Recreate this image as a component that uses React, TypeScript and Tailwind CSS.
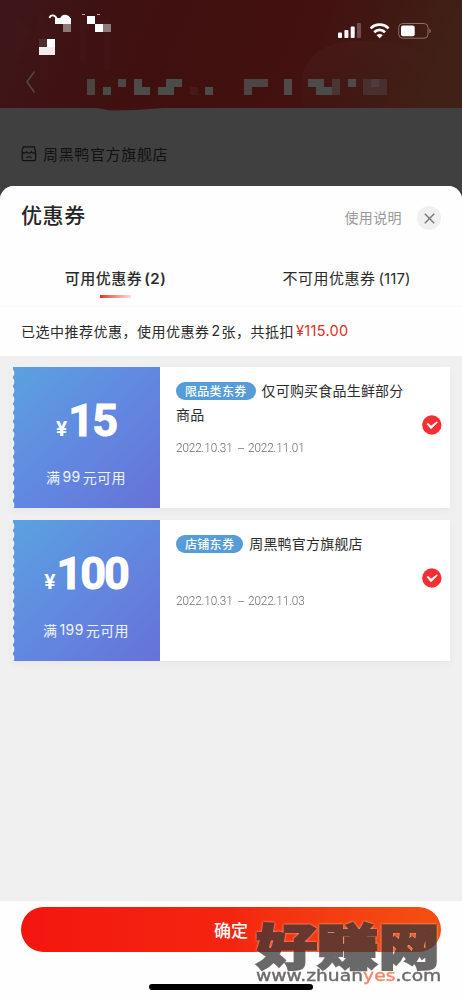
import React from 'react';

interface Coupon {
  amount: string;
  condition: string;
  tag: string;
  title: string;
  start: string;
  end: string;
}

const coupons: Coupon[] = [
  {
    amount: '15',
    condition: '99',
    tag: '限品类东券',
    title: '仅可购买食品生鲜部分商品',
    start: '2022.10.31',
    end: '2022.11.01',
  },
  {
    amount: '100',
    condition: '199',
    tag: '店铺东券',
    title: '周黑鸭官方旗舰店',
    start: '2022.10.31',
    end: '2022.11.03',
  },
];

// x, y, width, height, color
const blocks: [number, number, number, number, string][] = [
  [55, 18, 16, 6, '#fff'],
  [63, 24, 8, 8, '#8e7777'],
  [87, 16, 8, 8, '#fff'],
  [95, 24, 8, 8, '#fff'],
  [103, 24, 8, 8, '#8d7b7b'],
  [39, 39, 8, 8, '#4b2f2f'],
  [47, 39, 8, 8, '#fff'],
  [39, 47, 16, 8, '#f3eaec'],
  [87, 79, 8, 16, '#4b4542'],
  [103, 87, 8, 8, '#4b4b49'],
  [118, 79, 8, 8, '#4b4746'],
  [134, 79, 8, 16, '#4b4b49'],
  [142, 87, 8, 8, '#4b4b49'],
  [158, 87, 16, 8, '#4b4b49'],
  [166, 79, 16, 8, '#4b4b49'],
  [190, 87, 8, 8, '#471a18'],
  [205, 87, 8, 8, '#4b4b49'],
  [244, 79, 24, 8, '#4b4644'],
  [244, 87, 8, 8, '#4b4644'],
  [284, 79, 8, 16, '#4d4a49'],
  [308, 79, 16, 8, '#4b4b49'],
  [316, 87, 16, 8, '#4b4b49'],
  [332, 79, 8, 16, '#4a3534'],
  [348, 79, 8, 8, '#4b4b49'],
  [363, 79, 24, 16, '#49302e'],
  [371, 79, 8, 8, '#4c3c3a'],
];

const Header: React.FC = () => (
  <svg className="block h-[111px] w-[462px] shrink-0" viewBox="0 0 462 111">
    <defs>
      <linearGradient id="head" x1="0" y1="0" x2="1" y2="0.1">
        <stop offset="0" stopColor="#3e161a" />
        <stop offset="0.35" stopColor="#3f100f" />
        <stop offset="0.7" stopColor="#421110" />
        <stop offset="1" stopColor="#402017" />
      </linearGradient>
      <linearGradient id="fan" x1="0" y1="0" x2="0.8" y2="1">
        <stop offset="0" stopColor="#4c2020" stopOpacity="0.45" />
        <stop offset="0.7" stopColor="#4c2020" stopOpacity="0" />
      </linearGradient>
    </defs>
    <rect width="462" height="111" fill="#404040" />
    <rect width="462" height="108" fill="url(#head)" />
    <path d="M95 107.500h75q-30 3-60 3z" fill="#421110" />
    <path d="M302 75c8-26 30-34 60-34 40 0 70 14 100 36v31H302z" fill="url(#fan)" />
    <path d="M15 15v50l15-35zM38 10l10 10v60h-8zM80 20h30v50h-6V30H86v30h-6z" fill="#481c1d" opacity="0.3" />
    <path d="M49.500 18c1-3.500 5.500-3.500 7 .5" fill="none" stroke="#fff" strokeWidth="1.800" />
    <path d="M60 19c1-5 8-6 11 0z" fill="#fff" />
    <path d="M82 14.500h3M97 14.500h3" stroke="#b9a5a5" strokeWidth="1" />
    {blocks.map(([x, y, w, h, fill]) => (
      <rect key={`${x}-${y}`} x={x} y={y} width={w} height={h} fill={fill} />
    ))}
    <path d="M34.500 71.500 27 81.800l7.500 10.700" fill="none" stroke="#554343" strokeWidth="1.700" />
    <g fill="#fff">
      <rect x="338" y="32.500" width="4" height="5.500" rx="1" />
      <rect x="344.400" y="30" width="4" height="8" rx="1" />
      <rect x="350.700" y="26.500" width="4" height="11.500" rx="1" />
      <rect x="357" y="23" width="4" height="15" rx="1" opacity="0.25" />
    </g>
    <g fill="none" stroke="#fff" strokeWidth="2.700">
      <path d="M370.600 28.400c5-5 13-5 18 0" />
      <path d="M374.200 32.200c3-3 7.800-3 10.800 0" />
    </g>
    <path d="M376.500 35.200c1.800-1.700 4.600-1.700 6.300 0l-3.100 3.100z" fill="#fff" />
    <rect x="398.700" y="23.500" width="29.300" height="14.700" rx="4" fill="none" stroke="#8a6d69" />
    <rect x="401" y="25.500" width="13.700" height="10.700" rx="2" fill="#fff" />
    <path d="M429.300 28.500c2 .8 2 4 0 4.800z" fill="#8a6d69" />
  </svg>
);

const ShopRow: React.FC = () => (
  <div className="flex h-[75px] shrink-0 items-center pt-[11px] pl-[21px]">
    <svg className="h-4 w-4" viewBox="0 0 16 16" fill="none" stroke="#111" strokeWidth="1.200">
      <path d="M2.500.8h10.800l1.200 4c.2 1.600-.8 2.300-1.800 2.300-1.400 0-2.100-1.400-2.100-1.400S9.800 7.100 8 7.100 5.400 5.700 5.400 5.700 4.700 7.100 3.300 7.100C2.100 7.100.7 6.200.9 4.800z" />
      <path d="M1.200 6.800v6.400c0 .8.600 1.400 1.400 1.400h10.600c.8 0 1.400-.6 1.400-1.400V6.800M5.500 11.800c1.300-1.300 3.700-1.300 5 0" />
    </svg>
    <span className="ml-[6px] text-[15px] leading-5 tracking-[0.65px] text-[#111]">周黑鸭官方旗舰店</span>
  </div>
);

const CouponCard: React.FC<{ coupon: Coupon }> = ({ coupon }) => (
  <div className="flex h-[141px] bg-white shadow-[0_3px_8px_rgba(0,0,0,0.04)]">
    <div className="relative flex w-[148px] flex-col items-center bg-gradient-to-br from-[#5aa2e0] via-[#6188e0] to-[#6672d8] text-white">
      <svg className="absolute top-0 left-0 h-full w-[3px]" viewBox="0 0 3 141">
        {Array.from({ length: 16 }, (_, i) => (
          <ellipse key={i} cx="0" cy={6 + i * 8.8} rx="2.300" ry="3.600" fill="#f0f0f0" />
        ))}
        <rect width="1" height="141" fill="#f0f0f0" />
      </svg>
      <div className="mt-[28px] flex h-[52px] items-baseline font-['Roboto','Noto_Sans_CJK_SC',sans-serif] font-bold">
        <span className="mr-[1px] text-[21px] leading-[52px]">¥</span>
        <span className="text-[45px] leading-[52px] tracking-[-2px] [-webkit-text-stroke:1px_white]">{coupon.amount}</span>
      </div>
      <div className="mt-[20px] flex h-5 items-center gap-[2px] text-[14px] leading-5 tracking-[0.4px] text-white/90">
        <span>满</span>
        <span className="font-['Inter','Noto_Sans_CJK_SC',sans-serif]">{coupon.condition}</span>
        <span>元可用</span>
      </div>
    </div>
    <div className="flex flex-1 items-start pl-4">
      <div className="w-[236px] pt-[11px]">
        <div className="h-[54px] text-[14px] leading-6 tracking-[0.2px] text-[#2c2c2c]">
          <span className="mr-[6px] inline-block h-[18px] rounded-full bg-[#559cd9] px-[9px] align-[0px] text-[12px] leading-[17px] font-medium tracking-[0.3px] text-white">
            {coupon.tag}
          </span>
          {coupon.title}
        </div>
        <div className="mt-[6px] flex items-center font-['Roboto','Noto_Sans_CJK_SC',sans-serif] text-[13px] leading-5 font-light text-[#6c6c6c]">
          <span className="w-[62px] origin-left scale-x-[0.9] tracking-[-0.1px]">{coupon.start}</span>
          <span className="h-px w-[6px] bg-[#999]" />
          <span className="ml-[4px] w-[62px] origin-left scale-x-[0.9] tracking-[-0.1px]">{coupon.end}</span>
        </div>
      </div>
    </div>
    <div className="flex w-[28px] items-center pb-[25px]">
      <svg className="h-5 w-5" viewBox="0 0 20 20">
        <circle cx="9.800" cy="10" r="9.700" fill="#f52e32" />
        <path d="m4.500 9 1.700-.9 2.900 2.600 5.600-4.200 1.200.8-6.300 6.500h-1z" fill="#fff" />
      </svg>
    </div>
  </div>
);

const Watermark: React.FC = () => (
  <div className="pointer-events-none absolute top-[920px] left-[256px] w-[190px]">
    <div className="h-[47px] w-[150px] origin-left scale-x-[1.25] text-[49px] leading-[47px] font-black whitespace-nowrap text-[#383838] opacity-75 drop-shadow-[0_0_1px_#ffe4dc] [-webkit-text-stroke:2px_#383838]">
      好赚网
    </div>
    <div className="mt-[1px] w-[150px] origin-left scale-x-[1.17] font-['DejaVu_Sans',sans-serif] text-[16px] leading-4 whitespace-nowrap text-[#6b6b6b] [-webkit-text-stroke:0.4px_currentColor]">
      www.zhuan<span className="text-[#fa8468]">yes</span>.com
    </div>
  </div>
);

export default function App() {
  return (
    <div className="relative flex h-[1000px] w-[462px] flex-col overflow-hidden bg-[#404040] font-['Noto_Sans_CJK_SC',sans-serif]">
      <Header />
      <ShopRow />
      <div className="flex flex-1 flex-col overflow-hidden rounded-t-[14px] bg-[#f0f0f0]">
        <div className="bg-[#fefefe]">
          <div className="flex h-[64px] items-center pr-[21px] pl-[21px]">
            <h2 className="pb-[8px] text-[21px] leading-7 font-medium tracking-[0.6px] text-[#262626]">优惠券</h2>
            <span className="ml-auto pb-[2px] text-[14px] leading-5 tracking-[0.4px] text-[#999]">使用说明</span>
            <div className="ml-[15px] flex h-6 w-6 items-center justify-center rounded-full bg-[#f0f0f0]">
              <svg className="h-[11px] w-[11px]" viewBox="0 0 11 11" stroke="#777" strokeWidth="1.400">
                <path d="m.8.8 9.400 9.400M10.200.8.800 10.200" />
              </svg>
            </div>
          </div>
          <div className="flex h-[57px] border-b border-[#fafafa] text-[15px] leading-5 tracking-[0.5px] text-[#2b2b2b]">
            <div className="flex w-1/2 flex-col items-center pt-[18px] font-medium">
              <span>
                可用优惠券<span className="ml-[2px] font-['Inter',sans-serif] font-semibold">(2)</span>
              </span>
              <span className="mt-[6px] h-[3px] w-[31px] bg-gradient-to-r from-[#e0281e] to-[#fbdcdc]" />
            </div>
            <div className="w-1/2 pt-[18px] text-center">
              不可用优惠券<span className="ml-[3px] font-['Inter',sans-serif] tracking-[0.1px]">(117)</span>
            </div>
          </div>
          <div className="flex h-[49px] items-center pb-[2px] pl-[21px] text-[14px] leading-5 tracking-[0.5px] text-[#2b2b2b]">
            已选中推荐优惠，使用优惠券
            <span className="mr-[1px] ml-[2px] font-['Inter',sans-serif]">2</span>张，共抵扣
            <span className="ml-[2px] font-['Inter',sans-serif] text-[14.5px] tracking-[0.3px] text-[#dc3028]">¥115.00</span>
          </div>
        </div>
        <div className="flex flex-1 flex-col gap-3 pt-[11px] pr-3 pl-3">
          {coupons.map((coupon) => (
            <CouponCard key={coupon.amount} coupon={coupon} />
          ))}
        </div>
        <div className="h-[99px] bg-[#fefefe] px-[21px] pt-[6px]">
          <button className="flex h-[45px] w-full items-center justify-center rounded-full bg-gradient-to-r from-[#f4150f] via-[#f42510] to-[#f35010] text-[17px] font-medium text-white">
            确定
          </button>
        </div>
      </div>
      <div className="absolute top-[984px] left-[149px] h-[6px] w-[164px] rounded-full bg-black" />
      <Watermark />
    </div>
  );
}
